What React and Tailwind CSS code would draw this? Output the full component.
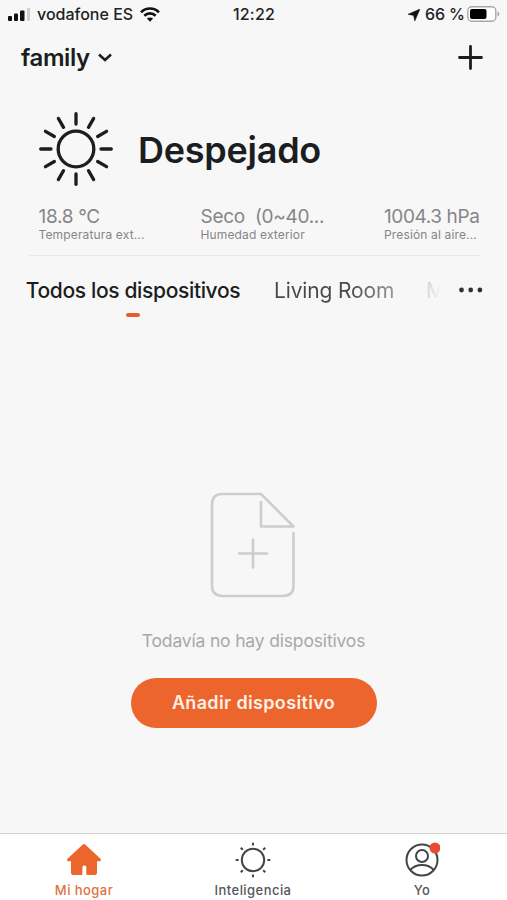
const SUN_ANGLES = [0, 30, 60, 90, 120, 150, 180, 210, 240, 270, 300, 330];
const SMALL_SUN_ANGLES = [0, 45, 90, 135, 180, 225, 270, 315];

const StatusBar = () => (
  <div className="h-7 grid grid-cols-3 items-center pl-[8px] pr-[7px] text-[16px] leading-7 font-medium text-[#222]">
    <div className="flex items-center">
      <svg width="22" height="13" viewBox="0 0 22 13">
        <rect x="0" y="8" width="4" height="5" rx="1" fill="#111" />
        <rect x="6" y="5.500" width="4" height="7.500" rx="1" fill="#111" />
        <rect x="12" y="2.500" width="4.500" height="10.500" rx="1" fill="#111" />
        <rect x="19" y="0" width="3.500" height="13" rx="1" fill="#d0d0d0" />
      </svg>
      <span className="ml-[7px] w-[97px] whitespace-nowrap">vodafone ES</span>
      <svg className="ml-[6px]" width="20" height="15" viewBox="0 0 20 15" fill="none" stroke="#111" strokeWidth="2.600">
        <path d="M1 5.300C6 .3 14 .3 19 5.300" />
        <path d="M4.300 8.700C7.500 5.600 12.500 5.600 15.700 8.700" />
        <path d="M10 14.800L6.900 11.600C8.700 10 11.300 10 13.100 11.600Z" fill="#111" stroke="none" />
      </svg>
    </div>
    <span className="text-center tracking-[0.2px]">12:22</span>
    <div className="flex items-center justify-end">
      <svg className="mt-[2px]" width="12" height="12" viewBox="0 0 12 12">
        <path d="M12 0L6.800 12L5.600 6.400L0 5.300Z" fill="#111" stroke="#111" strokeWidth=".5" strokeLinejoin="round" />
      </svg>
      <span className="ml-[5px] w-[39px] whitespace-nowrap tracking-[-0.1px]">66 %</span>
      <svg className="ml-[3px]" width="33" height="16" viewBox="0 0 33 16">
        <rect x=".8" y=".8" width="28" height="14.400" rx="4" fill="#fff" stroke="#a8a8a8" strokeWidth="1.400" />
        <rect x="3" y="3" width="16.500" height="10" rx="2" fill="#000" />
        <path d="M30.500 5.500C33 6.300 33 9.700 30.500 10.500Z" fill="#a8a8a8" />
      </svg>
    </div>
  </div>
);

const Header = () => (
  <header className="h-[60px] flex items-center justify-between pl-[21px] pr-6 pb-[1px] text-[#1b1d20]">
    <div className="flex items-center gap-[9px]">
      <h1 className="w-[68px] text-[24px] leading-[30px] font-semibold tracking-[-0.4px]">family</h1>
      <svg width="14" height="9" viewBox="0 0 14 9" fill="none" stroke="currentColor" strokeWidth="2.500">
        <path d="M1 1.500L7 7L13 1.500" />
      </svg>
    </div>
    <svg width="25" height="25" viewBox="0 0 25 25" stroke="currentColor" strokeWidth="2.800" strokeLinecap="round">
      <path d="M12.500 1.500V23.500M1.500 12.500H23.500" />
    </svg>
  </header>
);

const Reading = ({ value, label, className, valueClass }) => (
  <div className={className}>
    <div className={`text-[19px] leading-[22px] whitespace-pre ${valueClass}`}>{value}</div>
    <div className="text-[12px] leading-[14px] tracking-[0.15px] whitespace-nowrap">{label}</div>
  </div>
);

const Weather = () => (
  <section className="ml-[29px] mr-[27px] h-[168px] border-b border-[#e9e9e9]">
    <div className="h-[118px] flex items-center pl-[9px]">
      <svg className="mt-[4px]" width="76" height="76" viewBox="-38 -38 76 76" fill="none" stroke="#1b1d20" strokeWidth="3.300" strokeLinecap="round">
        <circle r="17.800" />
        {SUN_ANGLES.map((a) => (
          <path key={a} d="M0 -25V-35.300" transform={`rotate(${a})`} />
        ))}
      </svg>
      <h2 className="mt-[5px] ml-6 text-[36px] leading-[44px] font-semibold tracking-[-0.25px] text-[#1b1d20]">Despejado</h2>
    </div>
    <div className="flex pl-[9.500px] text-[#858687]">
      <Reading className="w-[162px]" valueClass="tracking-[-0.3px]" value="18.8 °C" label="Temperatura ext..." />
      <Reading className="w-[183.500px]" valueClass="tracking-[-0.3px]" value="Seco  (0~40..." label="Humedad exterior" />
      <Reading className="w-[96px]" valueClass="tracking-[-0.4px]" value="1004.3 hPa" label="Presión al aire..." />
    </div>
  </section>
);

const RoomTabs = () => (
  <nav className="h-[70px] flex pl-[26px] pt-[21px] text-[21px] leading-[28px] whitespace-nowrap">
    <div className="w-[214px] flex flex-col items-center text-[#1b1d20]">
      <span className="font-medium tracking-[-0.35px]">Todos los dispositivos</span>
      <span className="mt-[8px] h-[4px] w-[14px] rounded-full bg-[#e2602f]" />
    </div>
    <span className="ml-[34px] w-[120px] h-7 tracking-[-0.15px] bg-linear-to-r from-[#45484b] from-60% to-[#939597] bg-clip-text text-transparent">Living Room</span>
    <span className="ml-[32px] w-[20px] h-7 bg-linear-to-r from-[#d2d2d3] to-[#f7f7f7] to-80% bg-clip-text text-transparent">M</span>
    <svg className="ml-[12px] mt-[10px]" width="26" height="6" viewBox="0 0 26 6" fill="#303336">
      <circle cx="3.500" cy="3" r="2.400" />
      <circle cx="12.700" cy="3" r="2.400" />
      <circle cx="21.900" cy="3" r="2.400" />
    </svg>
  </nav>
);

const EmptyState = () => (
  <main className="flex-1 flex flex-col items-center pt-[166px]">
    <svg className="mr-[2px]" width="86" height="106" viewBox="0 0 86 106" fill="none" stroke="#cdcdcf" strokeWidth="2.600" strokeLinecap="round" strokeLinejoin="round">
      <path d="M83.500 41V93.500Q83.500 104 73 104H12.500Q2 104 2 93.500V12.500Q2 2 12.500 2H51L83.500 34.500H51V10" />
      <path d="M43 47.500V75.500M29 61.500H57" />
    </svg>
    <p className="mt-[31px] text-[17.500px] leading-6 tracking-[-0.17px] text-[#a7a8ac]">Todavía no hay dispositivos</p>
    <button className="mt-[24.500px] h-[50px] w-[246px] rounded-full bg-[#eb652d] text-[18px] font-semibold tracking-[0.35px] text-[#fff0e6]">
      Añadir dispositivo
    </button>
  </main>
);

const HomeIcon = () => (
  <svg width="36" height="36" viewBox="0 0 36 36" fill="#eb652d">
    <path d="M16.800 2.500Q18 1.400 19.200 2.500L34.400 16.800Q35.800 18.300 34.300 19.300H31V31Q31 33 29 33H21.500Q20.300 33 20.300 31.800V25.200Q20.300 23.500 18.800 23.500H18Q16.400 23.500 16.400 25.200V31.800Q16.400 33 15.200 33H7Q5 33 5 31V19.300H1.700Q.2 18.300 1.600 16.800Z" />
  </svg>
);

const SunIcon = () => (
  <svg width="36" height="36" viewBox="-18 -18 36 36" fill="none" stroke="#424548" strokeWidth="2">
    <circle r="11.200" />
    {SMALL_SUN_ANGLES.map((a) => (
      <path key={a} d="M0 -14.400V-17.300" transform={`rotate(${a})`} />
    ))}
  </svg>
);

const ProfileIcon = () => (
  <svg width="36" height="36" viewBox="0 0 36 36" fill="none" stroke="#424548" strokeWidth="2">
    <circle cx="18" cy="18" r="15.500" />
    <circle cx="18" cy="14" r="6" />
    <path d="M6.300 28C9.500 24.300 13.500 23 18 23S26.500 24.300 29.700 28" />
    <circle cx="31" cy="6" r="5.500" fill="#e94b30" stroke="none" />
  </svg>
);

const TABS = [
  { label: "Mi hogar", Icon: HomeIcon, color: "text-[#e07240]" },
  { label: "Inteligencia", Icon: SunIcon, color: "text-[#55585a]" },
  { label: "Yo", Icon: ProfileIcon, color: "text-[#55585a]" },
];

const BottomNav = () => (
  <footer className="h-[67px] grid grid-cols-3 border-t border-[#d2d2d2] bg-white">
    {TABS.map(({ label, Icon, color }) => (
      <div key={label} className={`flex flex-col items-center pt-[8px] pr-[1px] ${color}`}>
        <Icon />
        <span className="mt-[4px] text-[13px] leading-4 font-medium tracking-[0.45px]">{label}</span>
      </div>
    ))}
  </footer>
);

export default function App() {
  return (
    <div className="w-full h-[900px] flex flex-col overflow-hidden bg-[#f7f7f7] font-['Inter',sans-serif]">
      <StatusBar />
      <Header />
      <Weather />
      <RoomTabs />
      <EmptyState />
      <BottomNav />
    </div>
  );
}
